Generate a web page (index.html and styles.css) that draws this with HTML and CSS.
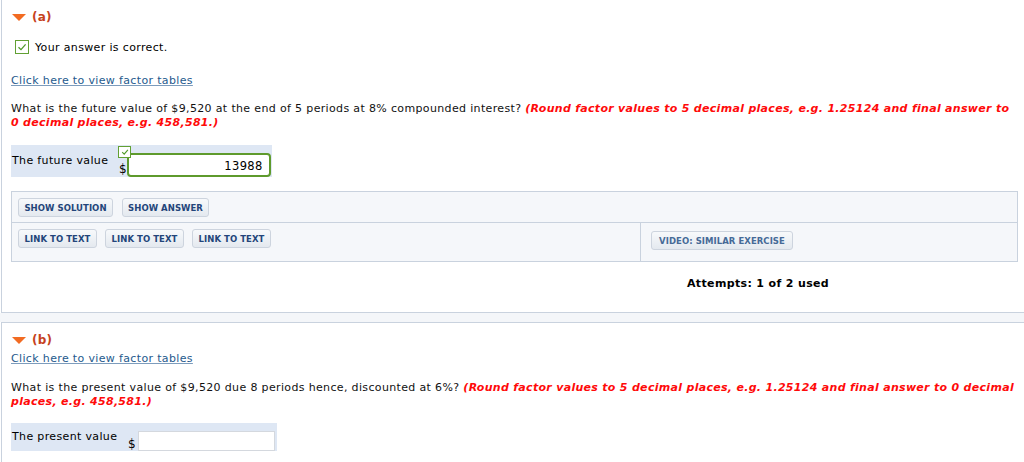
FILE: index.html
```html
<!DOCTYPE html>
<html>
<head>
<meta charset="utf-8">
<title>Question</title>
<link rel="stylesheet" href="styles.css">
</head>
<body>
<div class="page">
  <section class="panel panel-a">
    <div class="part-head"><span class="tri"></span><span class="part-label">(a)</span></div>
    <div class="correct">
      <span class="cbox"><svg width="10" height="10" viewBox="0 0 10 10"><path d="M1.5 5.2 L4 7.6 L8.6 2.4" fill="none" stroke="#4f9a28" stroke-width="1.3"/></svg></span>
      <span>Your answer is correct.</span>
    </div>
    <div class="link-line"><a class="factor-link" href="#">Click here to view factor tables</a></div>
    <p class="question">What is the future value of $9,520 at the end of 5 periods at 8% compounded interest? <em class="hint">(Round factor values to 5 decimal places, e.g. 1.25124 and final answer to 0 decimal places, e.g. 458,581.)</em></p>
    <div class="answer-row answer-a">
      <span class="answer-label">The future value</span>
      <span class="field">
        <span class="dollar">$</span>
        <span class="input input-correct">13988</span>
        <span class="badge"><svg width="8" height="8" viewBox="0 0 10 10"><path d="M1.5 5.2 L4 7.6 L8.6 2.4" fill="none" stroke="#4f9a28" stroke-width="1.4"/></svg></span>
      </span>
    </div>
    <div class="tools">
      <div class="tools-row1">
        <span class="btn btn-solution">SHOW SOLUTION</span>
        <span class="btn btn-answer">SHOW ANSWER</span>
      </div>
      <div class="tools-row2">
        <div class="tools-left">
          <span class="btn btn-link">LINK TO TEXT</span>
          <span class="btn btn-link">LINK TO TEXT</span>
          <span class="btn btn-link">LINK TO TEXT</span>
        </div>
        <div class="tools-right">
          <span class="btn btn-video">VIDEO: SIMILAR EXERCISE</span>
        </div>
      </div>
    </div>
    <div class="attempts">Attempts: 1 of 2 used</div>
  </section>
  <div class="gap"></div>
  <section class="panel panel-b">
    <div class="part-head"><span class="tri"></span><span class="part-label">(b)</span></div>
    <div class="link-line link-b"><a class="factor-link" href="#">Click here to view factor tables</a></div>
    <p class="question question-b">What is the present value of $9,520 due 8 periods hence, discounted at 6%? <em class="hint">(Round factor values to 5 decimal places, e.g. 1.25124 and final answer to 0 decimal places, e.g. 458,581.)</em></p>
    <div class="answer-row answer-b">
      <span class="answer-label">The present value</span>
      <span class="field">
        <span class="dollar">$</span>
        <span class="input input-empty"></span>
      </span>
    </div>
  </section>
</div>
</body>
</html>
```

FILE: styles.css
```css
html, body {
  margin: 0;
  padding: 0;
  background: #ffffff;
  overflow: hidden;
}

body {
  font-family: "DejaVu Sans", Verdana, sans-serif;
  font-size: 11px;
  letter-spacing: 0.35px;
  color: #000;
}

.page {
  width: 1100px;
  padding-left: 1px;
}

.panel {
  width: 1007px;
  border: 1px solid #c9d2de;
  background: #fff;
  padding: 0 9px;
}

.panel-a {
  border-top: none;
  padding-top: 10px;
  padding-bottom: 21px;
}

.panel-b {
  padding-top: 10px;
  padding-bottom: 20px;
}

.gap {
  height: 9px;
  background: #f4f6f9;
  width: 1040px;
  margin-left: -1px;
}

.part-head {
  display: flex;
  align-items: center;
  height: 14px;
  gap: 6px;
}

.tri {
  width: 0;
  height: 0;
  border-left: 7px solid transparent;
  border-right: 7px solid transparent;
  border-top: 7px solid #f26b22;
  margin-left: 1px;
  margin-top: 1px;
}

.part-label {
  font-size: 12px;
  font-weight: bold;
  color: #c6421d;
  letter-spacing: 0.2px;
}

.correct {
  display: flex;
  align-items: center;
  height: 14px;
  margin-top: 16px;
  padding-left: 4px;
  gap: 6px;
}

.cbox {
  box-sizing: border-box;
  width: 14px;
  height: 14px;
  border: 1.5px solid #62a033;
  display: flex;
  align-items: center;
  justify-content: center;
  background: #fff;
}

.link-line {
  line-height: 14px;
  margin-top: 20px;
}

.link-b {
  margin-top: 5px;
}

.factor-link {
  color: #255a8d;
  text-decoration: underline;
  text-decoration-color: #7d9cbc;
}

.question {
  margin: 14px 0 0;
  line-height: 14px;
  color: #111;
}

.question-b {
  margin-top: 15px;
}

.hint {
  color: #ff0a0a;
  font-weight: bold;
  font-style: italic;
  letter-spacing: 0.3px;
}

.answer-row {
  display: flex;
  align-items: flex-start;
  background: #dee7f4;
  width: fit-content;
  line-height: 14px;
}

.dollar {
  font-size: 12px;
  letter-spacing: 0;
}

.answer-a {
  margin-top: 15px;
  height: 32px;
  padding: 0 1px 0 1px;
}

.answer-a .answer-label {
  width: 107px;
  margin-top: 9px;
}

.answer-a .dollar {
  margin-top: 17px;
}

.answer-b {
  margin-top: 14px;
  height: 28px;
  padding: 0 2px 0 1px;
}

.answer-b .answer-label {
  width: 116px;
  margin-top: 7px;
}

.answer-b .dollar {
  margin-top: 14px;
  margin-right: 2px;
}

.field {
  position: relative;
  display: flex;
  align-items: flex-start;
}

.input {
  box-sizing: border-box;
  background: #fff;
  text-align: right;
}

.input-correct {
  width: 144px;
  height: 24px;
  margin-top: 8px;
  border: 2px solid #5e9a2c;
  border-radius: 4px;
  padding: 3px 6px 0 0;
  font-size: 11.5px;
  line-height: 16px;
}

.input-empty {
  width: 137px;
  height: 20px;
  margin-top: 8px;
  border: 1px solid #d4d8de;
}

.badge {
  position: absolute;
  left: -1px;
  top: 1px;
  box-sizing: border-box;
  width: 13px;
  height: 12px;
  border: 1.5px solid #62a033;
  background: #fff;
  display: flex;
  align-items: center;
  justify-content: center;
}

.tools {
  margin-top: 14px;
  border: 1px solid #c9d2de;
  background: #f5f7fa;
}

.tools-row1 {
  display: flex;
  gap: 9px;
  height: 31px;
  padding: 6px 0 0 6px;
  box-sizing: border-box;
  border-bottom: 1px solid #c9d2de;
}

.tools-row2 {
  display: grid;
  grid-template-columns: 629px 1fr;
  height: 38px;
}

.tools-left {
  display: flex;
  gap: 8px;
  padding: 6px 0 0 6px;
  border-right: 1px solid #c9d2de;
}

.tools-right {
  padding: 8px 0 0 10px;
}

.btn {
  display: inline-flex;
  align-items: center;
  justify-content: center;
  box-sizing: border-box;
  height: 19px;
  border: 1px solid #cdd4de;
  border-radius: 3px;
  background: linear-gradient(#f7f9fb, #e4e9ef);
  font-size: 8.5px;
  letter-spacing: 0.05px;
  font-weight: bold;
  color: #23457a;
  white-space: nowrap;
}

.btn-solution { width: 95px; }
.btn-answer { width: 87px; }
.btn-link { width: 79px; }
.btn-video { width: 142px; color: #456a97; }

.attempts {
  margin-top: 15px;
  padding-left: 676px;
  line-height: 14px;
  font-weight: bold;
}
```
